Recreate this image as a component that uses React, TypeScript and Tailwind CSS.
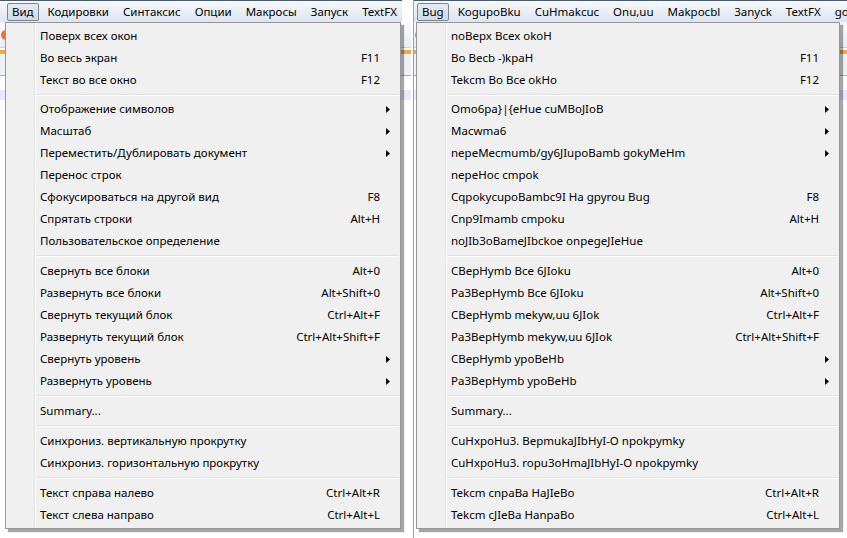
import React from 'react';

type Entry = { label: string; shortcut?: string; sub?: boolean } | 'sep';

const ruBar = ['Вид', 'Кодировки', 'Синтаксис', 'Опции', 'Макросы', 'Запуск', 'TextFX'];
const fakeBar = ['Bug', 'KogupoBku', 'CuHmakcuc', 'Onu,uu', 'Makpocbl', '3anyck', 'TextFX', 'go'];

const ruMenu: Entry[] = [
  { label: 'Поверх всех окон' },
  { label: 'Во весь экран', shortcut: 'F11' },
  { label: 'Текст во все окно', shortcut: 'F12' },
  'sep',
  { label: 'Отображение символов', sub: true },
  { label: 'Масштаб', sub: true },
  { label: 'Переместить/Дублировать документ', sub: true },
  { label: 'Перенос строк' },
  { label: 'Сфокусироваться на другой вид', shortcut: 'F8' },
  { label: 'Спрятать строки', shortcut: 'Alt+H' },
  { label: 'Пользовательское определение' },
  'sep',
  { label: 'Свернуть все блоки', shortcut: 'Alt+0' },
  { label: 'Развернуть все блоки', shortcut: 'Alt+Shift+0' },
  { label: 'Свернуть текущий блок', shortcut: 'Ctrl+Alt+F' },
  { label: 'Развернуть текущий блок', shortcut: 'Ctrl+Alt+Shift+F' },
  { label: 'Свернуть уровень', sub: true },
  { label: 'Развернуть уровень', sub: true },
  'sep',
  { label: 'Summary...' },
  'sep',
  { label: 'Синхрониз. вертикальную прокрутку' },
  { label: 'Синхрониз. горизонтальную прокрутку' },
  'sep',
  { label: 'Текст справа налево', shortcut: 'Ctrl+Alt+R' },
  { label: 'Текст слева направо', shortcut: 'Ctrl+Alt+L' },
];

const fakeMenu: Entry[] = [
  { label: 'noBepx Bcex okoH' },
  { label: 'Bo Becb -)kpaH', shortcut: 'F11' },
  { label: 'Tekcm Bo Bce okHo', shortcut: 'F12' },
  'sep',
  { label: 'Omo6pa}|{eHue cuMBoJIoB', sub: true },
  { label: 'Macwma6', sub: true },
  { label: 'nepeMecmumb/gy6JIupoBamb gokyMeHm', sub: true },
  { label: 'nepeHoc cmpok' },
  { label: 'CqpokycupoBambc9I Ha gpyrou Bug', shortcut: 'F8' },
  { label: 'Cnp9Imamb cmpoku', shortcut: 'Alt+H' },
  { label: 'noJIb3oBameJIbckoe onpegeJIeHue' },
  'sep',
  { label: 'CBepHymb Bce 6JIoku', shortcut: 'Alt+0' },
  { label: 'Pa3BepHymb Bce 6JIoku', shortcut: 'Alt+Shift+0' },
  { label: 'CBepHymb mekyw,uu 6JIok', shortcut: 'Ctrl+Alt+F' },
  { label: 'Pa3BepHymb mekyw,uu 6JIok', shortcut: 'Ctrl+Alt+Shift+F' },
  { label: 'CBepHymb ypoBeHb', sub: true },
  { label: 'Pa3BepHymb ypoBeHb', sub: true },
  'sep',
  { label: 'Summary...' },
  'sep',
  { label: 'CuHxpoHu3. BepmukaJIbHyI-O npokpymky' },
  { label: 'CuHxpoHu3. ropu3oHmaJIbHyI-O npokpymky' },
  'sep',
  { label: 'Tekcm cnpaBa HaJIeBo', shortcut: 'Ctrl+Alt+R' },
  { label: 'Tekcm cJIeBa HanpaBo', shortcut: 'Ctrl+Alt+L' },
];

const Arrow = () => (
  <svg width="4" height="7" viewBox="0 0 4 7" className="block">
    <path d="M0 0 L4 3.5 L0 7 Z" fill="#000" />
  </svg>
);

const MenuBar = ({ items, cls }: { items: string[]; cls: string }) => (
  <div className={`h-[22px] border-t border-[#4a5a70] bg-gradient-to-b from-[#f7f9fc] to-[#dbe4f0] flex items-center overflow-hidden ${cls}`}>
    {items.map((it, i) => (
      <div
        key={it}
        className={
          i === 0
            ? 'h-[18px] px-[4px] flex items-center border border-[#7a8594] rounded-[2px] bg-gradient-to-b from-[#e4ebf4] to-[#d0dbe8] mr-[2px]'
            : 'h-[18px] px-[7px] flex items-center whitespace-nowrap'
        }
      >
        {it}
      </div>
    ))}
  </div>
);

const Dropdown = ({ entries, pos }: { entries: Entry[]; pos: string }) => (
  <div className={`absolute ${pos} top-[22px] border border-[#979797] bg-[#f0f0f0] shadow-[3px_3px_1px_rgba(0,0,0,0.35)] pt-[2px] pb-[2px]`}>
    <div className="absolute top-0 bottom-0 left-[28px] flex">
      <div className="w-[1px] bg-[#e2e3e3]" />
      <div className="w-[1px] bg-white" />
    </div>
    {entries.map((e, i) =>
      e === 'sep' ? (
        <div key={i} className={`${i === 3 ? 'h-[7px]' : 'h-[8px]'} ml-[30px] mr-[1px] flex flex-col justify-center`}>
          <div className="h-[1px] bg-[#e0e0e0]" />
          <div className="h-[1px] bg-white" />
        </div>
      ) : (
        <div key={i} className="relative h-[22px] flex items-center pl-[34px] whitespace-nowrap">
          <span className="flex-1">{e.label}</span>
          {e.shortcut && <span className="pl-[40px]">{e.shortcut}</span>}
          <span className="w-[20px] flex justify-end pr-[10px]">{e.sub && <Arrow />}</span>
        </div>
      )
    )}
  </div>
);

const Backdrop = () => (
  <div className="h-[516px] bg-white flex flex-col">
    <div className="h-[26px] bg-gradient-to-b from-[#fafbfd] to-[#e9eef5] border-b border-[#c9d2de] flex items-center pl-[1px]">
      <div className="w-[10px] h-[10px] rounded-full bg-[#e8743b]" />
    </div>
    <div className="h-[4px] bg-[#f3a64a] mt-[2px]" />
    <div className="h-[22px] bg-[#eef1f6] border-b border-[#a7b1bd]" />
    <div className="h-[10px] mt-[14px] bg-[#e8e8ff]" />
  </div>
);

export default function App() {
  return (
    <div
      className="w-[847px] h-[538px] bg-white flex overflow-hidden text-[11.5px] text-black leading-none"
      style={{ fontFamily: '"Noto Sans", "Open Sans", sans-serif' }}
    >
      <div className="relative w-[411px] shrink-0 overflow-hidden">
        <MenuBar items={ruBar} cls="pl-[7px] mr-[9px]" />
        <Backdrop />
        <Dropdown entries={ruMenu} pos="left-[5px] w-[396px]" />
      </div>
      <div className="relative w-[434px] ml-[2px] shrink-0 overflow-hidden border-l border-[#9aa3ad]">
        <MenuBar items={fakeBar} cls="pl-[3px]" />
        <Backdrop />
        <Dropdown entries={fakeMenu} pos="left-[2px] w-[424px]" />
      </div>
    </div>
  );
}
